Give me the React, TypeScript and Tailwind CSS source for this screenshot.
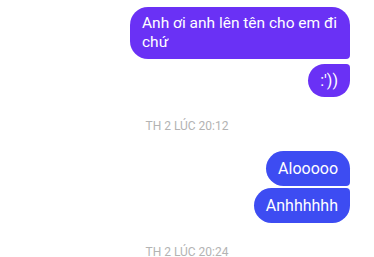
import React from "react";

export default function App() {
  const font = { fontFamily: "Roboto, 'Noto Sans', sans-serif" };
  return (
    <div className="w-[374px] h-[257px] bg-white overflow-hidden flex flex-col items-end pr-[24px] pt-[7px]" style={font}>
      <div className="max-w-[220px] bg-[#6a31f5] text-white text-[15.5px] leading-[19px] px-[12px] py-[7px] rounded-[18px] rounded-br-[4px]">
        Anh ơi anh lên tên cho em đi chứ
      </div>
      <div className="mt-[5px] bg-[#6a31f5] text-white text-[16px] leading-[19px] px-[12px] py-[7px] rounded-[18px] rounded-tr-[4px]">
        :'))
      </div>
      <div className="self-stretch pl-[24px] mt-[21px] text-center text-[12px] leading-[16px] text-[#b3b3b3]">
        TH 2 LÚC 20:12
      </div>
      <div className="mt-[17px] bg-[#3d4cf2] text-white text-[16px] leading-[19px] px-[12px] py-[8px] rounded-[18px] rounded-br-[4px]">
        Alooooo
      </div>
      <div className="mt-[2px] bg-[#3d4cf2] text-white text-[16px] leading-[19px] px-[12px] py-[8px] rounded-[18px] rounded-tr-[4px]">
        Anhhhhhh
      </div>
      <div className="self-stretch shrink-0 pl-[24px] mt-[21px] text-center text-[12px] leading-[16px] text-[#b3b3b3]">
        TH 2 LÚC 20:24
      </div>
    </div>
  );
}
